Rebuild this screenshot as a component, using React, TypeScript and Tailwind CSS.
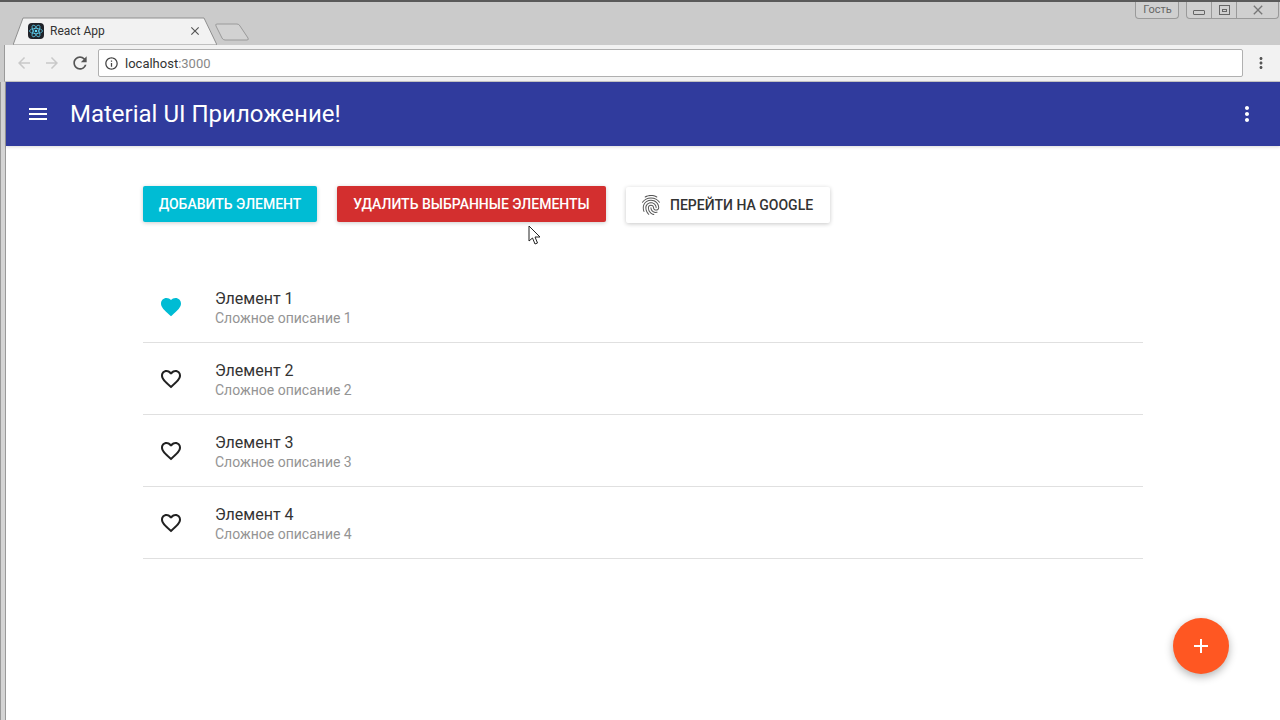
import React from 'react';
import { MdMenu, MdMoreVert, MdFingerprint, MdFavorite, MdFavoriteBorder, MdAdd, MdArrowBack, MdArrowForward, MdRefresh, MdInfoOutline, MdClose } from 'react-icons/md';

const items = [
  { title: 'Элемент 1', text: 'Сложное описание 1', liked: true },
  { title: 'Элемент 2', text: 'Сложное описание 2', liked: false },
  { title: 'Элемент 3', text: 'Сложное описание 3', liked: false },
  { title: 'Элемент 4', text: 'Сложное описание 4', liked: false },
];

const ReactLogo = () => (
  <svg viewBox="0 0 16 16" className="w-4 h-4 rounded-sm bg-[#20232a]">
    <g fill="none" stroke="#61dafb" strokeWidth="0.7">
      <ellipse cx="8" cy="8" rx="6.5" ry="2.6" />
      <ellipse cx="8" cy="8" rx="6.5" ry="2.6" transform="rotate(60 8 8)" />
      <ellipse cx="8" cy="8" rx="6.5" ry="2.6" transform="rotate(120 8 8)" />
    </g>
    <circle cx="8" cy="8" r="1.3" fill="#61dafb" />
  </svg>
);

const BrowserChrome = () => (
  <div className="shrink-0">
    <div className="h-[45px] bg-[#cbcbcb] border-t-2 border-[#5a5a5a] flex justify-between">
      <div className="flex items-end pl-[13px]">
        <div className="relative w-[204px] h-[28px] flex items-center pl-[15px] pr-[15px] text-[12px] text-[#333]">
          <svg viewBox="0 0 204 28" className="absolute inset-0 w-full h-full" preserveAspectRatio="none">
            <path d="M0 28 L10 1 H191 L204 28 Z" fill="#f2f2f2" stroke="#8f8f8f" strokeWidth="1" />
          </svg>
          <span className="relative"><ReactLogo /></span>
          <span className="relative ml-[6px] flex-1">React App</span>
          <MdClose className="relative text-[#555] w-[14px] h-[14px]" />
        </div>
        <svg viewBox="0 0 34 18" className="w-[34px] h-[18px] mb-[4px] -ml-[2px]">
          <path d="M2 1 H22 Q24 1 25 3 L33 15 Q34 17 32 17 H10 Q8 17 7 15 L1 3 Q0 1 2 1 Z" fill="#d2d2d2" stroke="#9a9a9a" strokeWidth="1" />
        </svg>
      </div>
      <div className="flex items-start gap-[7px] pr-[1px]">
        <div className="w-[44px] h-[17px] pt-[1px] pl-[1px] border border-t-0 border-[#9a9a9a] rounded-b-[4px] flex items-center justify-center text-[11px] text-[#666] bg-[#d0d0d0]">Гость</div>
        <div className="flex h-[17px] border border-t-0 border-[#9a9a9a] rounded-b-[4px] bg-[#d0d0d0] text-[#555]">
          <div className="w-[25px] flex items-end justify-center pb-[3px] border-r border-[#9a9a9a]"><div className="w-[12px] h-[5px] border border-[#666] rounded-[1px]"></div></div>
          <div className="w-[25px] flex items-center justify-center border-r border-[#9a9a9a]"><div className="w-[11px] h-[10px] border border-[#666] flex items-center justify-center"><div className="w-[5px] h-[3px] border border-[#666]"></div></div></div>
          <div className="w-[41px] flex items-center justify-center"><MdClose className="w-[16px] h-[16px] text-[#777]" /></div>
        </div>
      </div>
    </div>
    <div className="flex h-[37px] bg-[#cbcbcb]">
      <div className="ml-[4px] flex-1 h-[37px] bg-[#f2f2f2] border-l border-[#9a9a9a] border-b-[#c6c6c6] border-b flex items-center">
        <MdArrowBack className="w-[18px] h-[18px] text-[#c9c9c9] ml-[10px]" />
        <MdArrowForward className="w-[18px] h-[18px] text-[#c9c9c9] ml-[10px]" />
        <MdRefresh className="w-[20px] h-[20px] text-[#555] ml-[9px]" />
        <div className="ml-[8px] w-[1145px] h-[28px] bg-white border border-[#b0b0b0] rounded-[2px] flex items-center pl-[5px] text-[13px] text-[#333]">
          <MdInfoOutline className="w-[15px] h-[15px] text-[#444]" />
          <span className="ml-[6px] pt-[1px]">localhost<span className="text-[#888]">:3000</span></span>
        </div>
        <MdMoreVert className="w-[18px] h-[18px] text-[#555] ml-[9px]" />
      </div>
    </div>
  </div>
);

const App: React.FC = () => {
  return (
    <div className="relative w-[1280px] h-[720px] overflow-hidden bg-white font-['Roboto',sans-serif] flex flex-col">
      <BrowserChrome />
      <div className="flex-1 flex min-h-0">
        <div className="w-[6px] shrink-0 bg-[#d4d4d4] border-l border-r border-[#999]"></div>
        <div className="flex-1 min-w-0">
          <header className="h-[64px] bg-[#303b9d] flex items-center text-white shadow-[0_1px_3px_rgba(0,0,0,0.15)]">
            <MdMenu className="w-[24px] h-[24px] ml-[20px]" />
            <h1 className="ml-[20px] text-[24px] leading-none flex-1">Material UI Приложение!</h1>
            <MdMoreVert className="w-[24px] h-[24px] mr-[21px]" />
          </header>
          <main className="w-[1000px] ml-[137px] pt-[40px]">
            <div className="flex items-start gap-[20px]">
              <button className="h-[36px] w-[174px] bg-[#00bcd4] text-white text-[14px] font-medium rounded-[2px] shadow-[0_1px_4px_rgba(0,0,0,0.2)]">ДОБАВИТЬ ЭЛЕМЕНТ</button>
              <button className="h-[36px] w-[269px] bg-[#d32f2f] text-white text-[14px] font-medium rounded-[2px] shadow-[0_1px_4px_rgba(0,0,0,0.2)]">УДАЛИТЬ ВЫБРАННЫЕ ЭЛЕМЕНТЫ</button>
              <button className="mt-[1px] h-[36px] w-[204px] pl-[13px] bg-white text-[#333] text-[14px] font-medium rounded-[2px] flex items-center gap-[7px] shadow-[0_1px_4px_rgba(0,0,0,0.22)]">
                <MdFingerprint className="w-[24px] h-[24px] text-[#555]" />
                ПЕРЕЙТИ НА GOOGLE
              </button>
            </div>
            <ul className="mt-[48px]">
              {items.map((item) => (
                <li key={item.title} className="h-[72px] flex items-center border-b border-[#e0e0e0]">
                  <div className="w-[72px] pl-[16px] shrink-0">
                    {item.liked
                      ? <MdFavorite className="w-[24px] h-[24px] text-[#00bcd4]" />
                      : <MdFavoriteBorder className="w-[24px] h-[24px] text-[#212121]" />}
                  </div>
                  <div className="pt-[3px]">
                    <div className="text-[16px] leading-[19px] text-[#333]">{item.title}</div>
                    <div className="text-[14px] leading-[20px] text-[#949494]">{item.text}</div>
                  </div>
                </li>
              ))}
            </ul>
          </main>
        </div>
      </div>
      <button className="absolute left-[1173px] top-[618px] w-[56px] h-[56px] rounded-full bg-[#ff5722] text-white flex items-center justify-center shadow-[0_3px_8px_rgba(0,0,0,0.3)]">
        <MdAdd className="w-[24px] h-[24px]" />
      </button>
      <svg viewBox="0 0 14 21" className="absolute left-[528px] top-[225px] w-[14px] h-[21px]">
        <path d="M1 1 V16 L4.5 13 L7 19 L9.5 18 L7 12 H12 Z" fill="#fff" stroke="#222" strokeWidth="1" strokeLinejoin="round" />
      </svg>
    </div>
  );
};

export default App;
